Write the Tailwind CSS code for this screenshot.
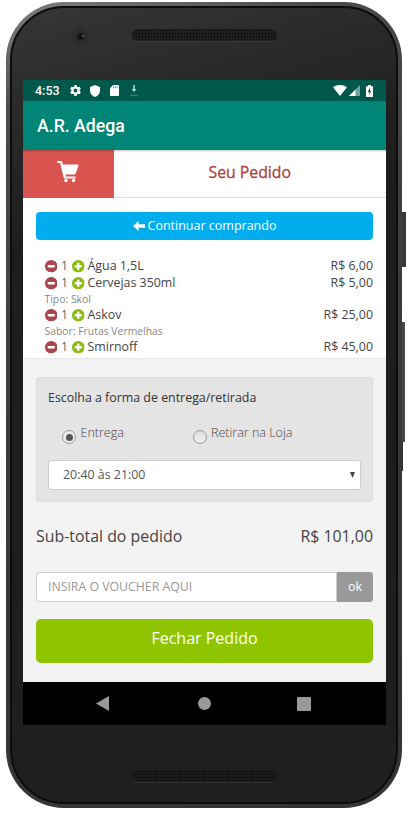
<!DOCTYPE html>
<html lang="pt-BR">
<head>
  <meta charset="UTF-8" />
  <meta name="viewport" content="width=device-width, initial-scale=1.0"/>
  <title>A.R. Adega - Seu Pedido</title>
  <script src="https://cdn.jsdelivr.net/npm/@tailwindcss/browser@4"></script>
</head>
<body class="bg-white overflow-hidden font-['Open_Sans',sans-serif] text-[#444]">

  <!-- Icons shared by the item rows -->
  <svg class="hidden">
    <symbol id="minus" viewBox="0 0 12 12">
      <circle cx="6" cy="6" r="6" fill="#a94450"/>
      <rect x="2.6" y="4.9" width="6.8" height="2.2" rx=".4" fill="#fff"/>
    </symbol>
    <symbol id="plus" viewBox="0 0 12 12">
      <circle cx="6" cy="6" r="6" fill="#8dbb12"/>
      <path d="M4.9 2.6h2.2v2.3h2.3v2.2H7.1v2.3H4.9V7.1H2.6V4.9h2.3z" fill="#fff"/>
    </symbol>
  </svg>

  <div class="relative w-[412px] h-[813px] pl-[6px] pt-[2px]">
    <!-- Side buttons -->
    <div class="absolute left-[400px] top-[212px] w-[6px] h-[55px] bg-[#383838]"></div>
    <div class="absolute left-[400px] top-[322px] w-[5px] h-[120px] bg-[#484848]"></div>
    <div class="absolute left-[400px] top-[442px] w-[3px] h-[29px] bg-[#303030]"></div>

    <!-- Phone body -->
    <div class="relative w-[396px] h-[806px] rounded-[58px] bg-[linear-gradient(160deg,#808080,#4a4a4a_12%,#3a3a3a_50%,#333)] p-[4px]">
      <div class="w-full h-full rounded-[54px] border-2 border-[#0c0c0c] bg-[linear-gradient(165deg,#363636,#282828_14%,#1d1d1d_28%,#1f1f20)] pl-[11px] flex flex-col">

        <div class="relative h-[72px] shrink-0">
          <div class="absolute left-[49px] top-[20px] size-[16px] rounded-full bg-[#2b2b2d] flex items-center justify-center">
            <div class="size-[7px] rounded-full bg-[#151519] flex items-center justify-end"><div class="size-[2px] rounded-full bg-[#66666c]"></div></div>
          </div>
          <div class="absolute left-[109px] top-[21px] w-[145px] h-[13px] rounded-full bg-[#151515] border-b border-[#3c3c3c] bg-[radial-gradient(#050505_35%,#1e1e1e_36%)] bg-[length:3px_3px]"></div>
        </div>

        <!-- Screen -->
        <div class="w-[363px] h-[645px] shrink-0 flex flex-col bg-[#f3f3f3]">
          <div class="h-[21px] bg-[#00574b] flex items-center pl-[12px] pr-[13px] text-white">
            <span class="font-[Roboto] font-medium text-[12.5px] leading-[21px] w-[34px]">4:53</span>
            <svg class="size-[13px]" viewBox="0 0 24 24" fill="#fff"><path d="M19.4 13c0-.3.1-.6.1-1s0-.7-.1-1l2.5-2-2.4-4.1-3 1.2c-.6-.5-1.2-.8-1.9-1.1L14 2h-4l-.6 3c-.7.3-1.3.6-1.9 1.1l-3-1.2L2.1 9l2.5 2c0 .3-.1.6-.1 1s0 .7.1 1l-2.5 2 2.4 4.1 3-1.2c.6.5 1.2.8 1.9 1.1L10 22h4l.6-3c.7-.3 1.3-.6 1.9-1.1l3 1.2 2.4-4.1zM12 15.5a3.5 3.5 0 1 1 0-7 3.5 3.5 0 0 1 0 7z"/></svg>
            <svg class="w-[10px] h-[12px] ml-[8px]" viewBox="0 0 10 12" fill="#fff"><path d="M5 0l5 2v3.5c0 3-2 5.5-5 6.5-3-1-5-3.5-5-6.5V2z"/></svg>
            <svg class="w-[9px] h-[11px] ml-[10px]" viewBox="0 0 9 11"><path d="M3.2 0H8a1 1 0 0 1 1 1v9a1 1 0 0 1-1 1H1a1 1 0 0 1-1-1V3.2z" fill="#fff"/><path d="M3.6 1.3v2M5.3 1.3v2M7 1.3v2" stroke="#00574b" stroke-width=".6"/></svg>
            <svg class="w-[8px] h-[11px] ml-[11px]" viewBox="0 0 8 11"><path d="M3.2 0h1.6v4h1.7L4 7 1.5 4h1.7z" fill="#b9d3cf"/><path d="M0 10.3h8" stroke="#5f948b" stroke-width=".8"/></svg>
            <div class="ml-auto flex items-center">
              <svg class="w-[14px] h-[11px]" viewBox="0 0 14 11" fill="#fff"><path d="M7 11L0 2.3C4-.75 10-.75 14 2.3z"/></svg>
              <svg class="w-[11px] h-[11px] ml-[2px]" viewBox="0 0 11 11"><path d="M11 0v11H0z" fill="#6fa59c"/><path d="M6.5 4.5V11H0z" fill="#fff"/></svg>
              <svg class="w-[7px] h-[12px] ml-[6px]" viewBox="0 0 7 12"><path d="M2 0h3v1.3h2V12H0V1.3h2z" fill="#fff"/><path d="M4 2.8L1.8 7h1.4v3L5.3 6H4z" fill="#00574b"/></svg>
            </div>
          </div>

          <div class="h-[49px] bg-[#008577] flex items-center pl-[14px] pt-[2px] relative shadow-[0_1px_2px_rgba(0,0,0,0.25)]">
            <h1 class="font-[Roboto] font-medium text-[17.7px] text-white">A.R. Adega</h1>
          </div>

          <!-- Page header -->
          <div class="h-[48px] bg-white flex border-b border-[#ddd]">
            <div class="w-[90.5px] h-[48px] bg-[#d9534f] flex justify-center pt-[11px]">
              <svg class="w-[22px] h-[22px]" viewBox="0 0 22 22" fill="#fff"><path d="M.9 0h3.300c.5 0 .8.300.9.700l.8 2.800h14.900c.6 0 .9.500.7 1l-2.900 8.300c-.1.400-.5.600-.9.600H8.300l.6 2h8.900c1.300 0 1.300 2 0 2H7.600c-.5 0-.8-.3-.9-.7L3.100 2H.9C-.3 2-.3 0 .9 0z"/><circle cx="9" cy="19.500" r="1.700"/><circle cx="16.600" cy="19.500" r="1.700"/></svg>
            </div>
            <h2 class="flex-1 text-center text-[15.8px] leading-[44px] font-medium text-[#a94442] [-webkit-text-stroke:0.3px_#a94442]">Seu Pedido</h2>
          </div>

          <!-- Items -->
          <div class="h-[161px] shrink-0 bg-white px-[13px] pt-[14px] border-b border-[#e8e8e8] overflow-hidden">
            <a href="#" class="h-[28px] rounded-[4px] bg-[#02adee] text-white text-[12.5px] flex items-center justify-center gap-[3px]">
              <svg class="w-[12px] h-[10px]" viewBox="0 0 12 10" fill="#fff"><path d="M0 5L5.5 0v3.3H12v3.4H5.5V10z"/></svg>
              Continuar comprando
            </a>
            <ul id="items" class="pt-[18px] pl-[8.5px] text-[12.4px]"></ul>
          </div>

          <!-- Checkout -->
          <div class="px-[13px] pt-[18px] h-[323px]">
            <div class="h-[125px] border border-[#dcdcdc] rounded-[3px] bg-[#e4e4e4] px-[11px] pt-[10px]">
              <p class="text-[12.4px] leading-[20px] text-[#333]">Escolha a forma de entrega/retirada</p>
              <div class="flex pt-[16px] pl-[14px] text-[12.5px] leading-[18px] font-light text-[#444] h-[52px]">
                <label class="flex w-[131px] gap-[4.5px]">
                  <span class="mt-[6px] size-[14px] rounded-full border border-[#999] bg-[#ececec] flex items-center justify-center"><span class="size-[7px] rounded-full bg-[#555]"></span></span>
                  Entrega
                </label>
                <label class="flex gap-[4px]">
                  <span class="mt-[6px] size-[14px] rounded-full border border-[#999] bg-linear-to-b from-[#ddd] to-[#f0f0f0]"></span>
                  Retirar na Loja
                </label>
              </div>
              <div class="h-[30px] bg-white border border-[#ccc] rounded-[3px] flex items-center justify-between pl-[14px] pr-[5px] text-[12.4px] text-[#555]">
                20:40 às 21:00
                <svg class="w-[5px] h-[6px]" viewBox="0 0 5 6" fill="#444"><path d="M0 0h5L2.5 6z"/></svg>
              </div>
            </div>

            <div class="flex justify-between pt-[22px] h-[70px] text-[15.9px] leading-[24px] text-[#444]">
              <span>Sub-total do pedido</span>
              <span>R$ 101,00</span>
            </div>

            <div class="flex h-[30px]">
              <div class="flex-1 bg-white border border-[#ccc] rounded-l-[3px] pl-[11px] text-[12.3px] leading-[28px] text-[#999]">INSIRA O VOUCHER AQUI</div>
              <button class="w-[36px] bg-[#999] rounded-r-[3px] text-white text-[12.5px] leading-[28px]">ok</button>
            </div>

            <button class="w-full h-[44px] mt-[17px] rounded-[5px] bg-[#8fc400] text-white text-[16px] leading-[38px] pb-[6px]">Fechar Pedido</button>
          </div>

          <!-- Android navigation -->
          <div class="h-[43px] bg-black flex items-center pl-[73px]">
            <svg class="w-[13px] h-[15px]" viewBox="0 0 13 15" fill="#999"><path d="M13 0v15L0 7.5z"/></svg>
            <div class="size-[13px] rounded-full bg-[#999] ml-[89px]"></div>
            <div class="size-[14px] bg-[#999] rounded-[1px] ml-[86px]"></div>
          </div>
        </div>

        <div class="relative h-[74px]">
          <div class="absolute left-[109px] top-[45px] w-[145px] h-[13px] rounded-full bg-[#111] border-b border-[#333] bg-[radial-gradient(#050505_35%,#1b1b1b_36%)] bg-[length:3px_3px]"></div>
        </div>
      </div>
    </div>
  </div>

  <script>
    const items = [
      { name: 'Água 1,5L', price: 'R$ 6,00' },
      { name: 'Cervejas 350ml', price: 'R$ 5,00', note: 'Tipo: Skol' },
      { name: 'Askov', price: 'R$ 25,00', note: 'Sabor: Frutas Vermelhas' },
      { name: 'Smirnoff', price: 'R$ 45,00' },
      { name: '', price: '' }
    ];

    document.getElementById('items').innerHTML = items.map(i => `
      <li>
        <div class="flex items-center h-[17px]">
          <svg class="size-[12.5px]"><use href="#minus"/></svg>
          <span class="w-[15px] text-center text-[#666]">${i.name ? 1 : ''}</span>
          <svg class="size-[12.5px] mr-[3px]"><use href="#plus"/></svg>
          <span>${i.name}</span>
          <span class="ml-auto">${i.price}</span>
        </div>
        ${i.note ? `<p class="text-[10.4px] leading-[15px] h-[15px] text-[#888]">${i.note}</p>` : ''}
      </li>
    `).join('');
  </script>
</body>
</html>
